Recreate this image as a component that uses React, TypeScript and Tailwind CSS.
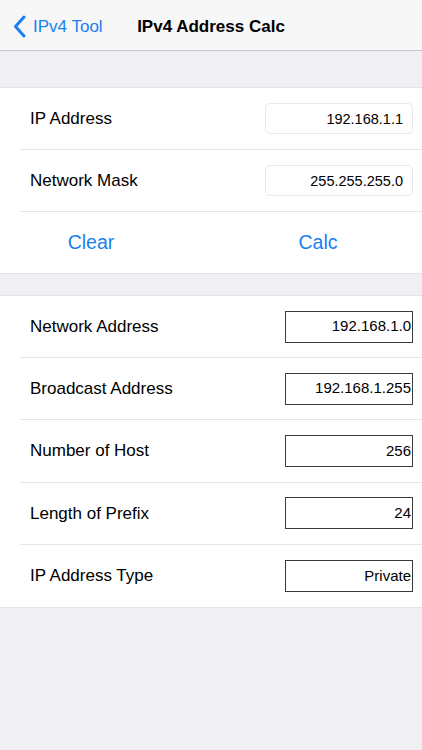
import React, { useState } from 'react';

type Result = { label: string; value: string };

const results: Result[] = [
  { label: 'Network Address', value: '192.168.1.0' },
  { label: 'Broadcast Address', value: '192.168.1.255' },
  { label: 'Number of Host', value: '256' },
  { label: 'Length of Prefix', value: '24' },
  { label: 'IP Address Type', value: 'Private' },
];

const App: React.FC = () => {
  const [ip, setIp] = useState('192.168.1.1');
  const [mask, setMask] = useState('255.255.255.0');

  return (
    <div className="min-h-[750px] w-full bg-[#efeff4] font-['Liberation_Sans',Arial,sans-serif] text-black">
      {/* Nav bar */}
      <header className="grid h-[51px] grid-cols-[1fr_auto_1fr] items-center border-b border-[#c8c7cc] bg-[#f7f7f8] pt-[3px]">
        <button className="flex items-center gap-[7px] pl-[13px] text-[17px] text-[#1a7ff0]">
          <svg width="13" height="23" viewBox="0 0 13 23" fill="none">
            <path d="M11 2L2.5 11.5L11 21" stroke="currentColor" strokeWidth="3" strokeLinecap="round" strokeLinejoin="round" />
          </svg>
          <span>IPv4 Tool</span>
        </button>
        <h1 className="text-[17px] font-bold">IPv4 Address Calc</h1>
        <div />
      </header>

      {/* Input section */}
      <section className="mt-[36px] border-y border-[#e4e4e8] bg-white">
        <div className="flex h-[61px] items-center justify-between pl-[30px] pr-[9px]">
          <span className="text-[17px]">IP Address</span>
          <input
            value={ip}
            onChange={e => setIp(e.target.value)}
            className="h-[31px] w-[148px] rounded-[5px] border border-[#e8e8ea] bg-white pr-[9px] text-right text-[14.5px] outline-none"
          />
        </div>
        <div className="ml-[20px] h-px bg-[#e6e6e9]" />
        <div className="flex h-[61px] items-center justify-between pl-[30px] pr-[9px]">
          <span className="text-[17px]">Network Mask</span>
          <input
            value={mask}
            onChange={e => setMask(e.target.value)}
            className="h-[31px] w-[148px] rounded-[5px] border border-[#e8e8ea] bg-white pr-[9px] text-right text-[14.5px] outline-none"
          />
        </div>
        <div className="ml-[20px] h-px bg-[#e6e6e9]" />
        <div className="flex h-[61px] items-center">
          <button className="w-[182px] text-[19.5px] text-[#1a7ff0]" onClick={() => { setIp(''); setMask(''); }}>
            Clear
          </button>
          <button className="ml-[32px] flex-1 text-[19.5px] text-[#1a7ff0]">Calc</button>
        </div>
      </section>

      {/* Results section */}
      <section className="mt-[21px] border-y border-[#e4e4e8] bg-white">
        {results.map((r, i) => (
          <div key={r.label}>
            {i > 0 && <div className="ml-[20px] h-px bg-[#e6e6e9]" />}
            <div className={`flex items-center justify-between pl-[30px] pr-[9px] ${i >= 2 ? 'h-[61.5px]' : 'h-[61px]'}`}>
              <span className="text-[17px]">{r.label}</span>
              <div className="flex h-[32px] w-[128px] items-center justify-end border border-[#3a3a3a] pr-[1px] text-[15px]">
                {r.value}
              </div>
            </div>
          </div>
        ))}
      </section>
    </div>
  );
};

export default App;
